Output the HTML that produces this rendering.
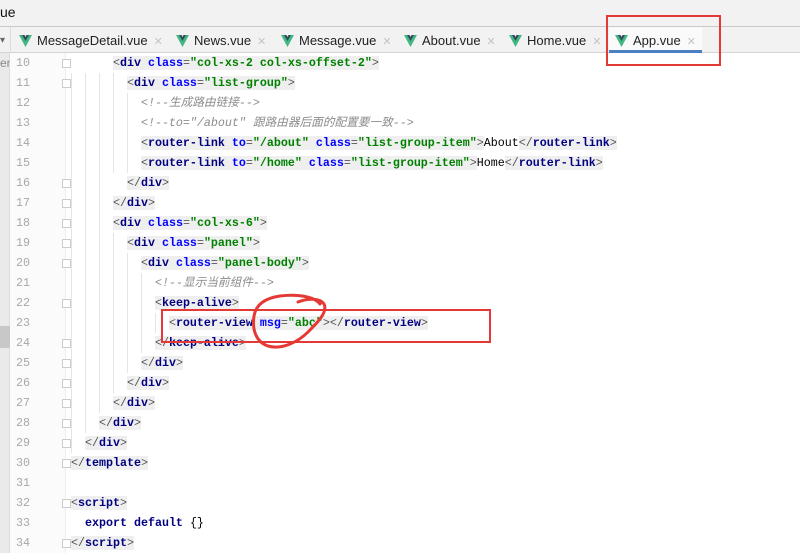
<!DOCTYPE html>
<html><head><meta charset="utf-8"><style>
*{margin:0;padding:0;box-sizing:border-box}
body{width:800px;height:553px;overflow:hidden;background:#fff;position:relative;font-family:"Liberation Sans",sans-serif}
#title{position:absolute;left:0;top:0;width:800px;height:27px;background:#f2f2f2;border-bottom:1px solid #c9c9c9;font-size:14px;line-height:24px;color:#111;padding-left:0}
#tabs{position:absolute;left:0;top:27px;width:800px;height:26px;background:#f2f2f2;border-bottom:1px solid #d4d4d4}
.tab{position:absolute;top:0;height:26px;font-size:13px;line-height:27px;color:#222;white-space:nowrap}
.tab svg{vertical-align:-2px;margin-right:5px}
.tab .x{color:#c4c4c4;font-size:11px;margin-left:6px}
#strip{position:absolute;left:0;top:53px;width:10px;height:500px;background:#eaeaea;border-right:1px solid #ddd}
#gut{position:absolute;left:10px;top:53px;width:56px;height:500px;background:#fbfbfb;border-right:1px solid #eee}
.ln{position:absolute;left:10px;width:40px;padding-left:6px;font-family:"Liberation Mono",monospace;font-size:11.7px;color:#a8a8a8;line-height:20px;height:20px}
.code{position:absolute;left:71px;font-family:"Liberation Mono",monospace;font-size:11.67px;line-height:20px;height:20px;white-space:pre;color:#000}
.h{background:#efefef}
.t{color:#000080;font-weight:bold}
.b{color:#555}
.a{color:#0000ff;font-weight:bold}
.v{color:#008000;font-weight:bold}
.c{color:#8c8c8c;font-style:italic}
.fold{position:absolute;left:62px;width:9px;height:9px;border:1px solid #ccc;background:#fff}
.guide{position:absolute;width:1px;background:#e4e4e4}
</style></head><body>
<div id="title">ue</div>
<div id="tabs">
<div style="position:absolute;left:0;top:8px;font-size:10px;color:#666">▾</div>
<div style="position:absolute;left:10px;top:0;width:1px;height:26px;background:#ddd"></div>
</div>
<div class="tab" style="left:19px;top:27px"><svg width="13" height="12" viewBox="0 0 13 12"><path d="M0 0h5l1.5 3L8 0h5L6.5 12z" fill="#41b883"/><path d="M3 0h2.5l1 2 1-2H10L6.5 6z" fill="#35495e"/></svg>MessageDetail.vue<span class="x">✕</span></div>
<div class="tab" style="left:176px;top:27px"><svg width="13" height="12" viewBox="0 0 13 12"><path d="M0 0h5l1.5 3L8 0h5L6.5 12z" fill="#41b883"/><path d="M3 0h2.5l1 2 1-2H10L6.5 6z" fill="#35495e"/></svg>News.vue<span class="x">✕</span></div>
<div class="tab" style="left:281px;top:27px"><svg width="13" height="12" viewBox="0 0 13 12"><path d="M0 0h5l1.5 3L8 0h5L6.5 12z" fill="#41b883"/><path d="M3 0h2.5l1 2 1-2H10L6.5 6z" fill="#35495e"/></svg>Message.vue<span class="x">✕</span></div>
<div class="tab" style="left:404px;top:27px"><svg width="13" height="12" viewBox="0 0 13 12"><path d="M0 0h5l1.5 3L8 0h5L6.5 12z" fill="#41b883"/><path d="M3 0h2.5l1 2 1-2H10L6.5 6z" fill="#35495e"/></svg>About.vue<span class="x">✕</span></div>
<div class="tab" style="left:509px;top:27px"><svg width="13" height="12" viewBox="0 0 13 12"><path d="M0 0h5l1.5 3L8 0h5L6.5 12z" fill="#41b883"/><path d="M3 0h2.5l1 2 1-2H10L6.5 6z" fill="#35495e"/></svg>Home.vue<span class="x">✕</span></div>
<div style="position:absolute;left:609px;top:27px;width:93px;height:26px;background:#fafafa"></div>
<div class="tab" style="left:615px;top:27px"><svg width="13" height="12" viewBox="0 0 13 12"><path d="M0 0h5l1.5 3L8 0h5L6.5 12z" fill="#41b883"/><path d="M3 0h2.5l1 2 1-2H10L6.5 6z" fill="#35495e"/></svg>App.vue<span class="x">✕</span></div>
<div style="position:absolute;left:609px;top:50px;width:93px;height:3px;background:#4a7fc1"></div>

<div id="strip"></div>
<div style="position:absolute;left:0;top:326px;width:10px;height:22px;background:#c8c8c8"></div>
<div style="position:absolute;left:0;top:55px;font-size:12px;color:#888;line-height:16px">en</div>
<div id="gut"></div>

<div class="guide" style="left:71px;top:73px;height:380px"></div>
<div class="guide" style="left:85px;top:73px;height:360px"></div>
<div class="guide" style="left:99px;top:73px;height:340px"></div>
<div class="guide" style="left:113px;top:73px;height:100px"></div>
<div class="guide" style="left:113px;top:233px;height:160px"></div>
<div class="guide" style="left:127px;top:93px;height:80px"></div>
<div class="guide" style="left:127px;top:253px;height:120px"></div>
<div class="guide" style="left:141px;top:273px;height:80px"></div>
<div class="guide" style="left:155px;top:313px;height:20px"></div>

<div class="ln" style="top:53px">10</div><div class="ln" style="top:73px">11</div><div class="ln" style="top:93px">12</div><div class="ln" style="top:113px">13</div><div class="ln" style="top:133px">14</div><div class="ln" style="top:153px">15</div><div class="ln" style="top:173px">16</div><div class="ln" style="top:193px">17</div><div class="ln" style="top:213px">18</div><div class="ln" style="top:233px">19</div><div class="ln" style="top:253px">20</div><div class="ln" style="top:273px">21</div><div class="ln" style="top:293px">22</div><div class="ln" style="top:313px">23</div><div class="ln" style="top:333px">24</div><div class="ln" style="top:353px">25</div><div class="ln" style="top:373px">26</div><div class="ln" style="top:393px">27</div><div class="ln" style="top:413px">28</div><div class="ln" style="top:433px">29</div><div class="ln" style="top:453px">30</div><div class="ln" style="top:473px">31</div><div class="ln" style="top:493px">32</div><div class="ln" style="top:513px">33</div><div class="ln" style="top:533px">34</div>

<div class="fold" style="top:59px"></div><div class="fold" style="top:79px"></div><div class="fold" style="top:179px"></div><div class="fold" style="top:199px"></div><div class="fold" style="top:219px"></div><div class="fold" style="top:239px"></div><div class="fold" style="top:259px"></div><div class="fold" style="top:299px"></div><div class="fold" style="top:339px"></div><div class="fold" style="top:359px"></div><div class="fold" style="top:379px"></div><div class="fold" style="top:399px"></div><div class="fold" style="top:419px"></div><div class="fold" style="top:439px"></div><div class="fold" style="top:459px"></div><div class="fold" style="top:499px"></div><div class="fold" style="top:539px"></div>

<div class="code" style="top:53px">      <span class="h"><span class="b">&lt;</span><span class="t">div </span><span class="a">class</span><span class="b">=</span><span class="v">"col-xs-2 col-xs-offset-2"</span><span class="b">&gt;</span></span></div>
<div class="code" style="top:73px">        <span class="h"><span class="b">&lt;</span><span class="t">div </span><span class="a">class</span><span class="b">=</span><span class="v">"list-group"</span><span class="b">&gt;</span></span></div>
<div class="code" style="top:93px">          <span class="c">&lt;!--生成路由链接--&gt;</span></div>
<div class="code" style="top:113px">          <span class="c">&lt;!--to="/about" 跟路由器后面的配置要一致--&gt;</span></div>
<div class="code" style="top:133px">          <span class="h"><span class="b">&lt;</span><span class="t">router-link </span><span class="a">to</span><span class="b">=</span><span class="v">"/about" </span><span class="a">class</span><span class="b">=</span><span class="v">"list-group-item"</span><span class="b">&gt;</span></span>About<span class="h"><span class="b">&lt;/</span><span class="t">router-link</span><span class="b">&gt;</span></span></div>
<div class="code" style="top:153px">          <span class="h"><span class="b">&lt;</span><span class="t">router-link </span><span class="a">to</span><span class="b">=</span><span class="v">"/home" </span><span class="a">class</span><span class="b">=</span><span class="v">"list-group-item"</span><span class="b">&gt;</span></span>Home<span class="h"><span class="b">&lt;/</span><span class="t">router-link</span><span class="b">&gt;</span></span></div>
<div class="code" style="top:173px">        <span class="h"><span class="b">&lt;/</span><span class="t">div</span><span class="b">&gt;</span></span></div>
<div class="code" style="top:193px">      <span class="h"><span class="b">&lt;/</span><span class="t">div</span><span class="b">&gt;</span></span></div>
<div class="code" style="top:213px">      <span class="h"><span class="b">&lt;</span><span class="t">div </span><span class="a">class</span><span class="b">=</span><span class="v">"col-xs-6"</span><span class="b">&gt;</span></span></div>
<div class="code" style="top:233px">        <span class="h"><span class="b">&lt;</span><span class="t">div </span><span class="a">class</span><span class="b">=</span><span class="v">"panel"</span><span class="b">&gt;</span></span></div>
<div class="code" style="top:253px">          <span class="h"><span class="b">&lt;</span><span class="t">div </span><span class="a">class</span><span class="b">=</span><span class="v">"panel-body"</span><span class="b">&gt;</span></span></div>
<div class="code" style="top:273px">            <span class="c">&lt;!--显示当前组件--&gt;</span></div>
<div class="code" style="top:293px">            <span class="h"><span class="b">&lt;</span><span class="t">keep-alive</span><span class="b">&gt;</span></span></div>
<div class="code" style="top:313px">              <span class="h"><span class="b">&lt;</span><span class="t">router-view </span><span class="a">msg</span><span class="b">=</span><span class="v">"abc"</span><span class="b">&gt;&lt;/</span><span class="t">router-view</span><span class="b">&gt;</span></span></div>
<div class="code" style="top:333px">            <span class="h"><span class="b">&lt;/</span><span class="t">keep-alive</span><span class="b">&gt;</span></span></div>
<div class="code" style="top:353px">          <span class="h"><span class="b">&lt;/</span><span class="t">div</span><span class="b">&gt;</span></span></div>
<div class="code" style="top:373px">        <span class="h"><span class="b">&lt;/</span><span class="t">div</span><span class="b">&gt;</span></span></div>
<div class="code" style="top:393px">      <span class="h"><span class="b">&lt;/</span><span class="t">div</span><span class="b">&gt;</span></span></div>
<div class="code" style="top:413px">    <span class="h"><span class="b">&lt;/</span><span class="t">div</span><span class="b">&gt;</span></span></div>
<div class="code" style="top:433px">  <span class="h"><span class="b">&lt;/</span><span class="t">div</span><span class="b">&gt;</span></span></div>
<div class="code" style="top:453px"><span class="h"><span class="b">&lt;/</span><span class="t">template</span><span class="b">&gt;</span></span></div>
<div class="code" style="top:493px"><span class="h"><span class="b">&lt;</span><span class="t">script</span><span class="b">&gt;</span></span></div>
<div class="code" style="top:513px">  <span class="t">export default </span>{}</div>
<div class="code" style="top:533px"><span class="h"><span class="b">&lt;/</span><span class="t">script</span><span class="b">&gt;</span></span></div>

<div style="position:absolute;left:606px;top:15px;width:115px;height:51px;border:2px solid #e53935"></div>
<div style="position:absolute;left:161px;top:309px;width:330px;height:34px;border:2px solid #e53935"></div>
<svg style="position:absolute;left:248px;top:292px" width="90" height="60" viewBox="0 0 90 60"><path d="M72 12C66 4 48 2 32 4C18 6 8 12 6 24C4 38 8 50 20 54C34 58 50 50 60 40C70 30 80 20 76 12C72 6 60 6 50 10" fill="none" stroke="#e53935" stroke-width="3" stroke-linecap="round"/></svg>
</body></html>
